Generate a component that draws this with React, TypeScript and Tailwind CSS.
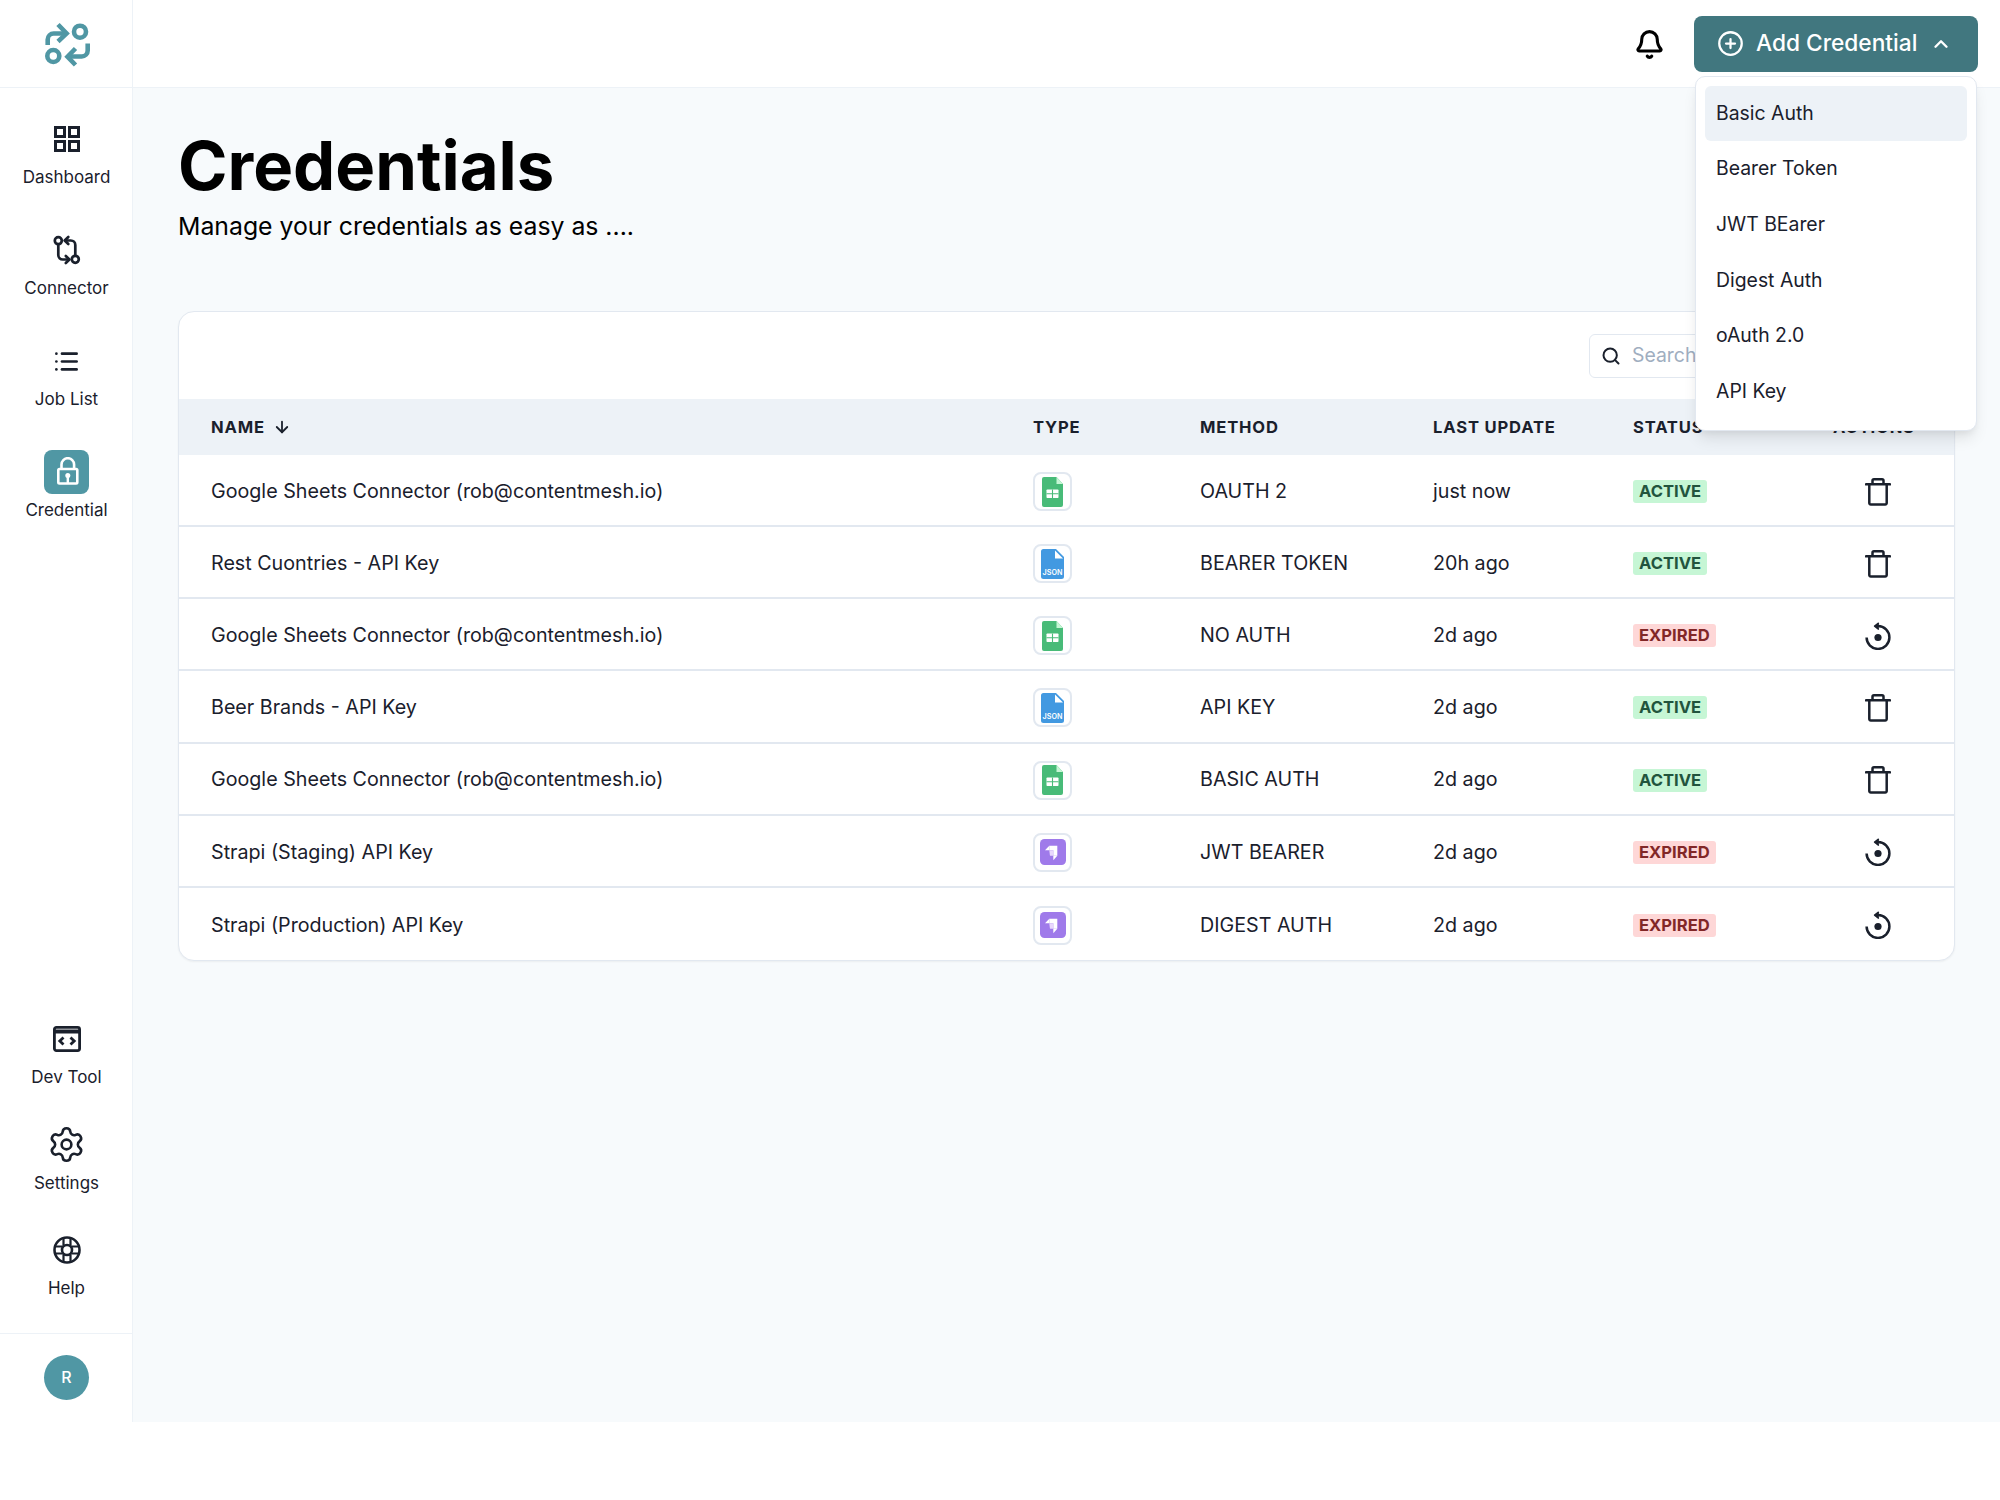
import React from "react";
import { Bell, CirclePlus, ChevronUp, Search, ArrowDown, List, Settings } from "lucide-react";

const font = "[font-family:Inter,'Liberation_Sans',sans-serif]";

function Logo() {
  return (
    <svg width="52" height="48" viewBox="40 20 52 48" fill="none" stroke="#5097a4" strokeWidth="4.6">
      <path d="M47.700 45v-5.500a6 6 0 0 1 6-6H64" />
      <path d="M58 24.500l8.600 9-8.600 8" />
      <circle cx="80" cy="31.700" r="6" />
      <circle cx="53.300" cy="56" r="6" />
      <path d="M87.700 43.500v7a6 6 0 0 1-6 6H70" />
      <path d="M75.500 48.500l-8 8.200 8 8.300" />
    </svg>
  );
}

function DashIcon() {
  return (
    <svg width="26" height="26" viewBox="0 0 26 26" fill="none" stroke="#1a202c" strokeWidth="3">
      <rect x="1.500" y="1.500" width="9" height="9" />
      <rect x="15.500" y="1.500" width="9" height="9" />
      <rect x="1.500" y="15.500" width="9" height="9" />
      <rect x="15.500" y="15.500" width="9" height="9" />
    </svg>
  );
}

function ConnectorIcon() {
  return (
    <svg width="30" height="32" viewBox="11 14 30 32" fill="none" stroke="#1a202c" strokeWidth="2.700" strokeLinecap="round" strokeLinejoin="round">
      <circle cx="17.300" cy="20.700" r="3.500" />
      <path d="M17.300 24.500v10.500a4.500 4.500 0 0 0 4.500 4.500H28" />
      <path d="M24.800 36l3.600 3.500-3.600 3.500" />
      <circle cx="34.300" cy="39.300" r="3.500" />
      <path d="M34.300 35.500V25a4.500 4.500 0 0 0-4.500-4.500H24" />
      <path d="M27.300 17l-3.600 3.500 3.600 3.500" />
    </svg>
  );
}

function HelpIcon() {
  return (
    <svg width="28" height="28" viewBox="0 0 28 28" fill="none" stroke="#1a202c" strokeWidth="2.600">
      <circle cx="14" cy="14" r="12.500" />
      <circle cx="14" cy="14" r="5" />
      <path d="M10.500 2v7.500M17.500 2v7.500M10.500 18.500V26M17.500 18.500V26M2 10.500h7.500M2 17.500h7.500M18.500 10.500H26M18.500 17.500H26" strokeWidth="2.200" />
    </svg>
  );
}

function LockTile() {
  return (
    <div className="w-[45px] h-[44px] rounded-[8px] bg-[#5097a4] flex items-center justify-center">
      <svg width="26" height="30" viewBox="13 12 26 30" fill="none" stroke="#fff" strokeWidth="2.600">
        <rect x="17.300" y="24" width="19" height="14.500" rx="1.200" />
        <path d="M20.500 24v-4.500a6.300 6.300 0 0 1 12.600 0V24" />
        <circle cx="26.800" cy="30.500" r="2.500" fill="#fff" stroke="none" />
        <path d="M26.800 31v7" strokeWidth="2.400" />
      </svg>
    </div>
  );
}

function DevIcon() {
  return (
    <svg width="28" height="26" viewBox="0 0 28 26" fill="none" stroke="#1a202c" strokeWidth="2.800">
      <rect x="1.400" y="1.400" width="25.200" height="23.200" rx="2" />
      <path d="M1.400 5.500h25.200" strokeWidth="4" />
      <path d="M10.500 11.500L6.800 15l3.700 3.500M17.500 11.500l3.700 3.500-3.700 3.500" />
    </svg>
  );
}

function Trash() {
  return (
    <svg width="26" height="28" viewBox="0 0 26 28" fill="none" stroke="#1a202c" strokeWidth="2.500" strokeLinejoin="round">
      <path d="M1 6.300h24" strokeLinecap="round" />
      <path d="M4.300 6.300V25a1.500 1.500 0 0 0 1.500 1.500h14.400a1.500 1.500 0 0 0 1.500-1.500V6.300" />
      <path d="M7.500 6.300V2.800a1.500 1.500 0 0 1 1.500-1.500h8a1.500 1.500 0 0 1 1.500 1.500v3.500" />
    </svg>
  );
}

function Reset() {
  return (
    <svg width="26" height="28" viewBox="0 0 26 28" fill="none" stroke="#1a202c" strokeWidth="2.500">
      <path d="M1.600 15.500a11.400 11.400 0 1 0 11.400-11.400h-1" />
      <path d="M13.800 1L9.600 4.100l4.200 3.400" fill="#1a202c" strokeLinejoin="round" strokeWidth="1.600" />
      <circle cx="13" cy="15.500" r="3.600" fill="#1a202c" stroke="none" />
    </svg>
  );
}

function SheetIcon() {
  return (
    <svg width="21" height="30" viewBox="0 0 21 30">
      <path d="M2 0h12.500L21 7v21a2 2 0 0 1-2 2H2a2 2 0 0 1-2-2V2a2 2 0 0 1 2-2z" fill="#48bb78" />
      <path d="M14.500 0L21 7h-6.500z" fill="#c6f6d5" />
      <rect x="4.500" y="12.500" width="12" height="8.500" rx="0.800" fill="#fff" />
      <path d="M4.500 16.700h12M10.500 12.500v8.500" stroke="#48bb78" strokeWidth="1.100" />
    </svg>
  );
}

function JsonIcon() {
  return (
    <svg width="23" height="30" viewBox="0 0 23 30">
      <path d="M2.500 0h12.500L23 8v19.500a2.500 2.500 0 0 1-2.500 2.500h-18A2.500 2.500 0 0 1 0 27.500V2.500A2.500 2.500 0 0 1 2.500 0z" fill="#4299e1" />
      <path d="M14 1.500L22 9.500h-8z" fill="#fff" />
      <text x="11.500" y="25.500" textAnchor="middle" fontSize="7.200" fontWeight="600" fill="#fff" fontFamily="Inter">JSON</text>
    </svg>
  );
}

function StrapiIcon() {
  return (
    <svg width="26" height="26" viewBox="0 0 26 26">
      <rect width="26" height="26" rx="4.500" fill="#9f7aea" />
      <path d="M9.300 6.700h8v10h-4v-5.400h-4z" fill="#fff" />
      <path d="M5 11.300l4.300-4.600v4.600z" fill="#fff" />
      <path d="M9.300 11.300h4v5.400H10z" fill="#e9d8fd" />
      <path d="M13.300 16.700h4l-4 4.600z" fill="#fff" />
    </svg>
  );
}

const typeIcons = { sheet: <SheetIcon />, json: <JsonIcon />, strapi: <StrapiIcon /> };

type Row = { name: string; type: keyof typeof typeIcons; method: string; updated: string; active: boolean };

const rows: Row[] = [
  { name: "Google Sheets Connector (rob@contentmesh.io)", type: "sheet", method: "OAUTH 2", updated: "just now", active: true },
  { name: "Rest Cuontries - API Key", type: "json", method: "BEARER TOKEN", updated: "20h ago", active: true },
  { name: "Google Sheets Connector (rob@contentmesh.io)", type: "sheet", method: "NO AUTH", updated: "2d ago", active: false },
  { name: "Beer Brands - API Key", type: "json", method: "API KEY", updated: "2d ago", active: true },
  { name: "Google Sheets Connector (rob@contentmesh.io)", type: "sheet", method: "BASIC AUTH", updated: "2d ago", active: true },
  { name: "Strapi (Staging) API Key", type: "strapi", method: "JWT BEARER", updated: "2d ago", active: false },
  { name: "Strapi (Production) API Key", type: "strapi", method: "DIGEST AUTH", updated: "2d ago", active: false },
];

const gridCols = "grid grid-cols-[854px_167px_233px_200px_200px_1fr] items-center";

function NavItem({ icon, label }: { icon: React.ReactNode; label: string }) {
  return (
    <div className="flex flex-col items-center">
      <div className="h-[44px] flex items-center justify-center">{icon}</div>
      <div className="mt-1 h-6 leading-6 text-[17px] text-[#1a202c]">{label}</div>
    </div>
  );
}

export default function App() {
  return (
    <div className={`${font} w-[2000px] h-[1500px] bg-white text-[#1a202c]`}>
      <div className="flex h-[1422px]">
        <aside className="w-[133px] shrink-0 bg-white border-r border-[#edf2f7] flex flex-col">
          <div className="h-[88px] shrink-0 border-b border-[#edf2f7] flex items-center justify-center"><Logo /></div>
          <nav className="flex-1 flex flex-col pt-[29px] pl-[1px]">
            <div className="flex flex-col gap-[39px]">
              <NavItem icon={<DashIcon />} label="Dashboard" />
              <NavItem icon={<ConnectorIcon />} label="Connector" />
              <NavItem icon={<List size={27} strokeWidth={2.4} color="#1a202c" />} label="Job List" />
              <NavItem icon={<LockTile />} label="Credential" />
            </div>
            <div className="mt-auto flex flex-col gap-[33.500px] pb-[33px]">
              <NavItem icon={<DevIcon />} label="Dev Tool" />
              <NavItem icon={<Settings size={39} strokeWidth={1.6} color="#1a202c" />} label="Settings" />
              <NavItem icon={<HelpIcon />} label="Help" />
            </div>
          </nav>
          <div className="h-[89px] shrink-0 border-t border-[#edf2f7] flex items-center justify-center pb-[2px] pl-[1px]">
            <div className="w-[45px] h-[45px] rounded-full bg-[#5097a4] flex items-center justify-center text-white text-base font-medium">R</div>
          </div>
        </aside>
        <div className="flex-1 flex flex-col min-w-0">
          <header className="h-[88px] shrink-0 bg-white border-b border-[#edf2f7] flex items-center justify-end pr-[22px] gap-[29px]">
            <Bell size={31} strokeWidth={2.400} color="#000" className="mt-[2px]" />
            <div className="relative">
              <button className="w-[284px] h-[56px] rounded-[8px] bg-[#41777f] text-white flex items-center pl-[23px] pr-[26px]">
                <CirclePlus size={27} strokeWidth={2} />
                <span className="ml-[12px] text-[22.700px] font-medium">Add Credential</span>
                <ChevronUp size={22} strokeWidth={2.600} className="ml-auto" />
              </button>
              <div className="absolute z-10 top-[60px] left-[1px] w-[282px] h-[355px] bg-white border border-[#e2e8f0] rounded-[10px] shadow-[0_10px_15px_-3px_rgba(0,0,0,0.1),0_4px_6px_-2px_rgba(0,0,0,0.05)] p-[9px] flex flex-col">
                {["Basic Auth", "Bearer Token", "JWT BEarer", "Digest Auth", "oAuth 2.0", "API Key"].map((t, i) => (
                  <div key={t} className={`h-[55.600px] shrink-0 rounded-[6px] flex items-center pl-[11px] text-[19.400px] ${i === 0 ? "bg-[#edf2f7]" : ""}`}>{t}</div>
                ))}
              </div>
            </div>
          </header>
          <main className="flex-1 bg-[#f7fafc] px-[45px] pt-[42px]">
            <h1 className="text-[67px] leading-[72px] font-bold text-black">Credentials</h1>
            <p className="mt-2 text-[24.800px] leading-8 text-black">Manage your credentials as easy as ....</p>
            <section className="mt-[69px] bg-white border border-[#e2e8f0] rounded-[16px] overflow-hidden shadow-[0_1px_2px_rgba(0,0,0,0.05)]">
              <div className="h-[87px] flex items-center justify-end pr-[24px]">
                <div className="w-[341px] h-[44px] border border-[#e2e8f0] rounded-[6px] flex items-center pl-[11px] gap-[11px]">
                  <Search size={20} strokeWidth={2.400} color="#1a202c" />
                  <input placeholder="Search" className="flex-1 min-w-0 outline-none text-[19.400px] placeholder:text-[#a0aec0]" />
                </div>
              </div>
              <div className={`${gridCols} h-[56px] bg-[#edf2f7] text-[16.600px] font-bold tracking-[0.05em] uppercase`}>
                <div className="pl-[32px] flex items-center gap-[8px]">NAME <ArrowDown size={18} strokeWidth={2.400} /></div>
                <div>TYPE</div>
                <div>METHOD</div>
                <div>LAST UPDATE</div>
                <div>STATUS</div>
                <div>ACTIONS</div>
              </div>
              {rows.map((r, i) => (
                <div key={i} className={`${gridCols} h-[72.150px] pt-[3px] text-[19.700px] ${i < rows.length - 1 ? "border-b-2 border-[#e2e8f0]" : ""}`}>
                  <div className="pl-[32px]">{r.name}</div>
                  <div>
                    <div className="w-[39px] h-[39px] rounded-[8px] border-2 border-[#e2e8f0] flex items-center justify-center">{typeIcons[r.type]}</div>
                  </div>
                  <div>{r.method}</div>
                  <div>{r.updated}</div>
                  <div className="flex items-center">
                    {r.active ? (
                      <span className="px-[6px] h-[23px] leading-[23px] rounded-[3px] bg-[#c6f6d5] text-[#22543d] text-[16.600px] font-bold">ACTIVE</span>
                    ) : (
                      <span className="px-[6px] h-[23px] leading-[23px] rounded-[3px] bg-[#fed7d7] text-[#822727] text-[16.600px] font-bold">EXPIRED</span>
                    )}
                  </div>
                  <div className="pl-[32px]">{r.active ? <Trash /> : <Reset />}</div>
                </div>
              ))}
            </section>
          </main>
        </div>
      </div>
    </div>
  );
}
